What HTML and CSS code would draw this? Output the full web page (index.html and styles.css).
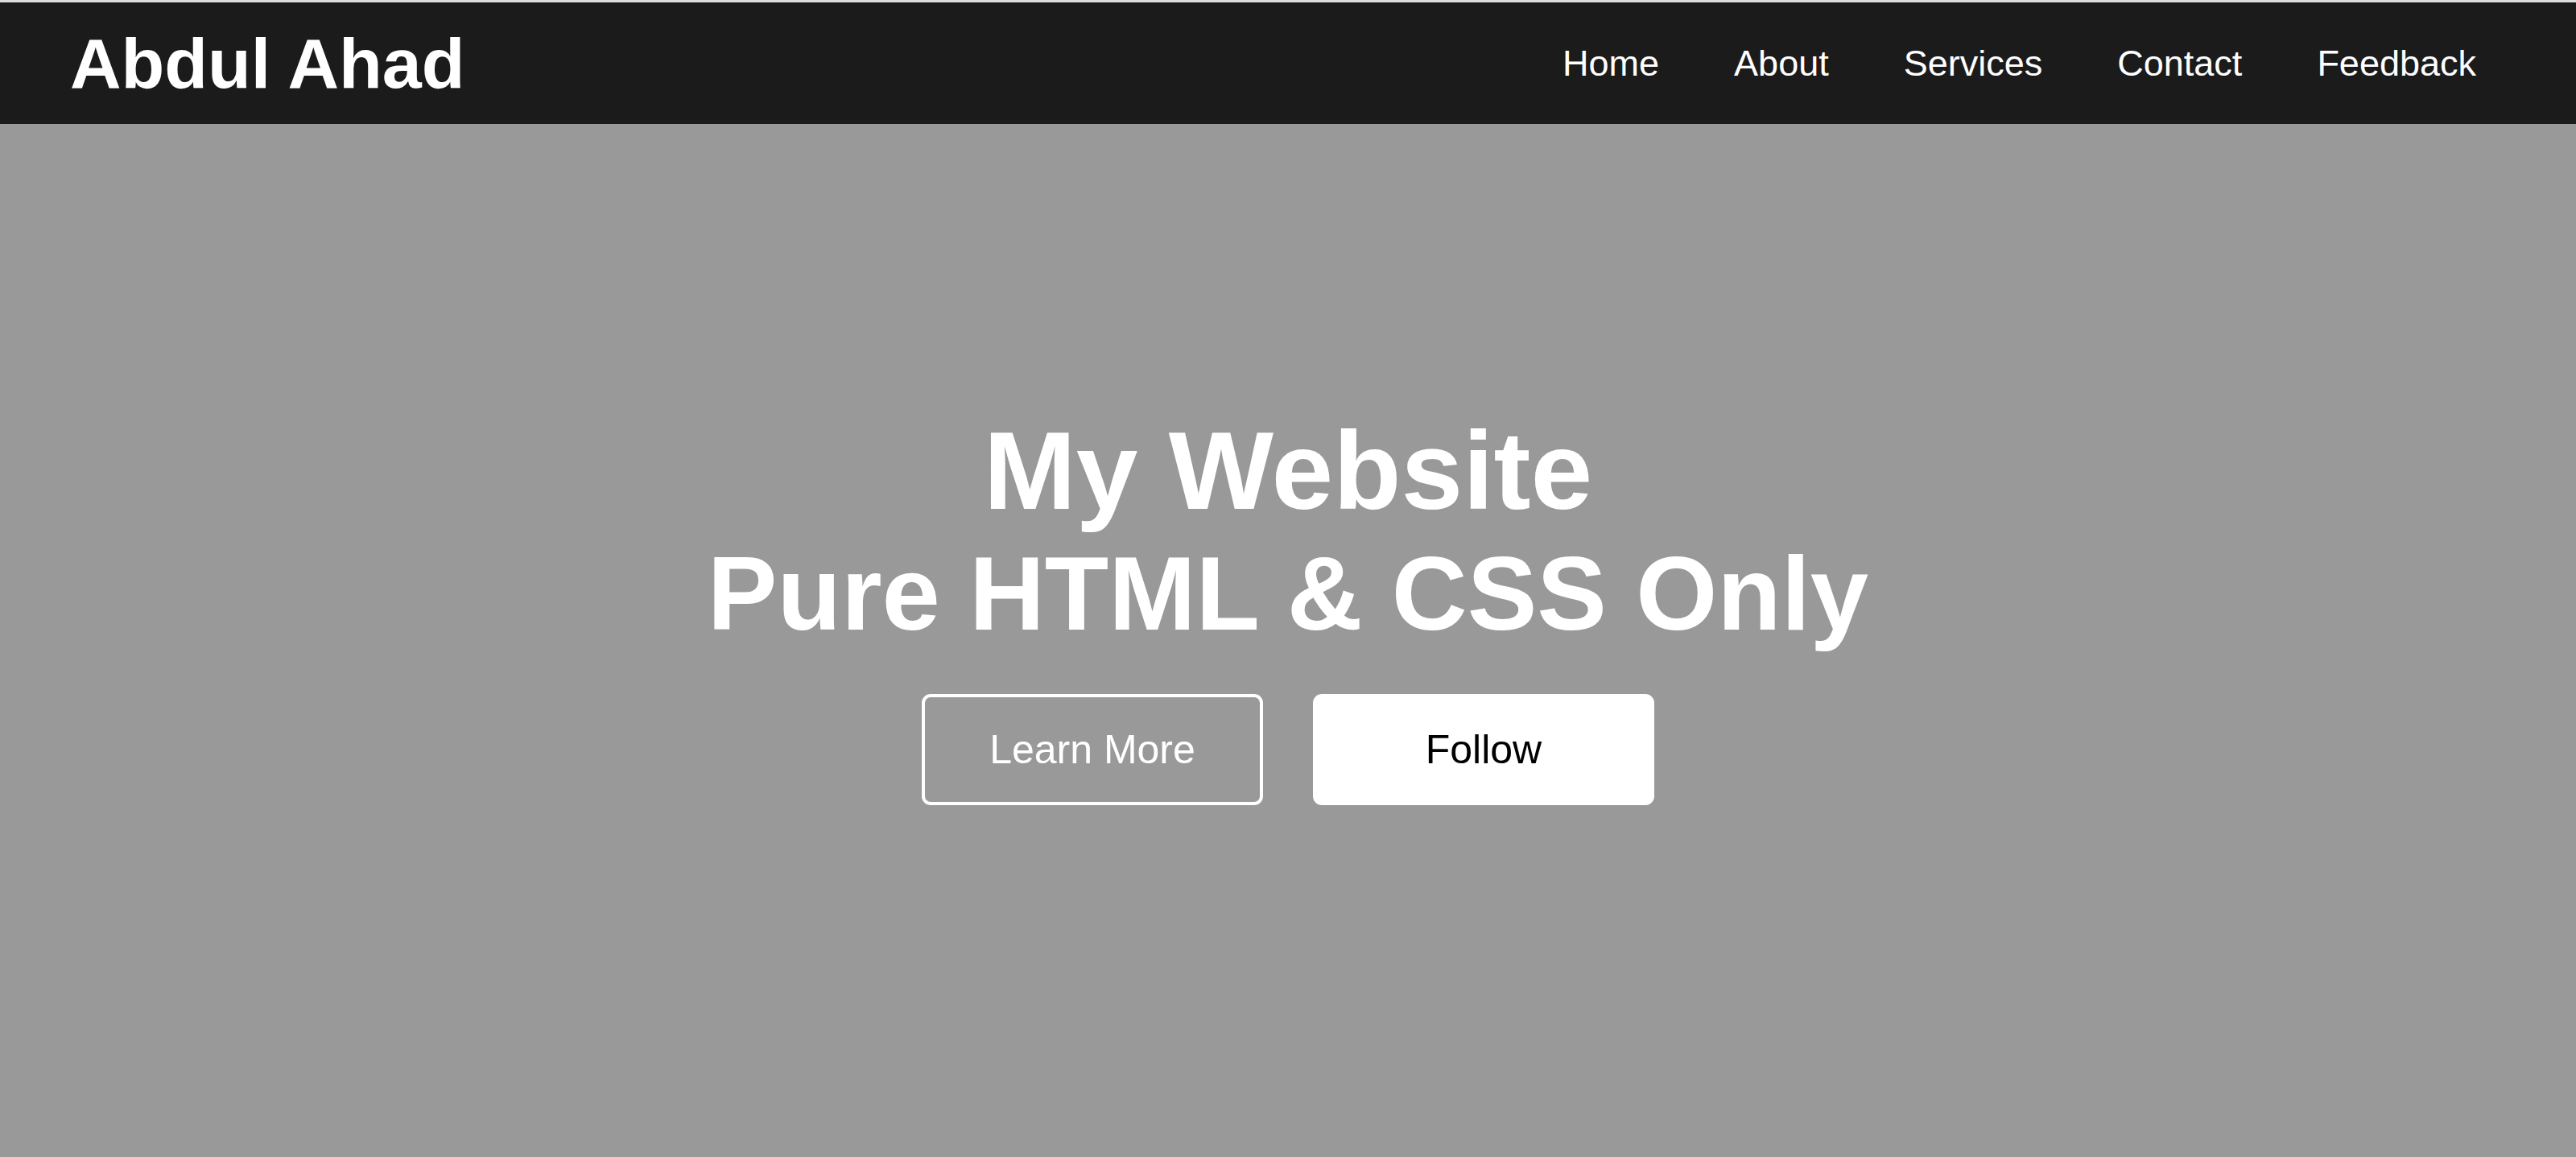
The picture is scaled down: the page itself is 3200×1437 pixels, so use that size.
FILE: index.html
```html
<!DOCTYPE html>
<html lang="en">
<head>
<meta charset="utf-8">
<title>Abdul Ahad</title>
<link rel="stylesheet" href="styles.css">
</head>
<body>
<header class="navbar">
  <div class="logo">Abdul Ahad</div>
  <nav class="menu">
    <a href="#">Home</a>
    <a href="#">About</a>
    <a href="#">Services</a>
    <a href="#">Contact</a>
    <a href="#">Feedback</a>
  </nav>
</header>
<section class="hero">
  <h1 class="title">My Website</h1>
  <h2 class="subtitle">Pure HTML &amp; CSS Only</h2>
  <div class="actions">
    <a class="btn btn-outline" href="#">Learn More</a>
    <a class="btn btn-solid" href="#">Follow</a>
  </div>
</section>
</body>
</html>
```
FILE: styles.css
```css
* { box-sizing: border-box; }
html, body { margin: 0; padding: 0; }
body {
  background: #dedede;
  padding-top: 3px;
  font-family: "Liberation Sans", Arial, sans-serif;
  color: #fff;
  min-height: 1437px;
}
.navbar {
  height: 151px;
  background: #1b1b1b;
  display: flex;
  align-items: center;
  justify-content: space-between;
  padding: 0 124px 0 87px;
}
.logo {
  font-size: 88px;
  font-weight: 700;
  color: #fff;
}
.menu {
  display: flex;
  gap: 93px;
}
.menu a {
  color: #fff;
  text-decoration: none;
  font-size: 45px;
}
.hero {
  background: #999999;
  min-height: 1283px;
  display: flex;
  flex-direction: column;
  align-items: center;
  padding-top: 353px;
}
.title {
  margin: 0;
  font-size: 138px;
  line-height: 154px;
  font-weight: 700;
}
.subtitle {
  margin: 4px 0 0;
  font-size: 130px;
  line-height: 145px;
  font-weight: 700;
}
.actions {
  margin-top: 52px;
  display: flex;
  gap: 62px;
}
.btn {
  width: 424px;
  height: 138px;
  border: 4px solid #fff;
  border-radius: 11px;
  display: flex;
  align-items: center;
  justify-content: center;
  font-size: 50px;
  text-decoration: none;
}
.btn-outline { color: #fff; background: transparent; }
.btn-solid { color: #000; background: #fff; }
```
